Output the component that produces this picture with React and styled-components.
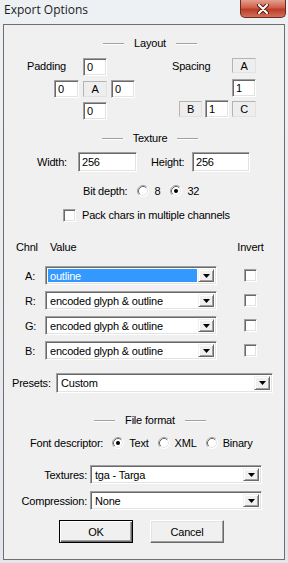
import React from "react";
import styled, { createGlobalStyle } from "styled-components";

const GlobalStyle = createGlobalStyle`
  html, body {
    margin: 0;
    padding: 0;
  }
  body {
    width: 288px;
    height: 563px;
    overflow: hidden;
    font-family: "Liberation Sans", Arial, sans-serif;
    font-size: 11px;
    letter-spacing: -0.2px;
    color: #000;
  }
  * {
    box-sizing: border-box;
  }
`;

const Window = styled.div`
  width: 288px;
  height: 563px;
  background: linear-gradient(#eef1f4, #e3e7eb);
  display: flex;
  flex-direction: column;
`;

const TitleBar = styled.div`
  height: 24px;
  display: flex;
  justify-content: space-between;
  align-items: flex-start;
`;

const Title = styled.div`
  font-family: "Open Sans", "Noto Sans", sans-serif;
  font-size: 12px;
  letter-spacing: 0;
  line-height: 16px;
  padding: 2px 0 0 4px;
  color: #1b1b1b;
`;

const CloseButton = styled.div`
  width: 46px;
  height: 18px;
  margin-right: 2px;
  border: 1px solid #6b2a22;
  border-top: none;
  border-radius: 0 0 5px 5px;
  background: linear-gradient(#e3a08f, #cf5e48 45%, #bd3d27 55%, #d0705a);
  display: flex;
  align-items: center;
  justify-content: center;
`;

const Client = styled.div`
  margin-left: 3px;
  width: 282px;
  height: 536px;
  border: 1px solid #6e6e6e;
  background: #f0f0f0;
  display: flex;
  flex-direction: column;
`;

const Section = styled.div`
  margin-top: ${(p) => p.$top}px;
  height: 14px;
  line-height: 14px;
  display: flex;
  align-items: center;
  justify-content: center;
  padding-left: 12px;
  gap: 10px;
`;

const Rule = styled.span`
  width: 21px;
  height: 1px;
  background: #a0a0a0;
  box-shadow: 0 1px 0 #fff;
`;

const LayoutRow = styled.div`
  margin-top: 8px;
  height: 62px;
  display: flex;
`;

const PadGrid = styled.div`
  margin-left: 23px;
  display: grid;
  grid-template-columns: 23px 25px 24px 24px;
  grid-template-rows: repeat(3, 18px);
  column-gap: 4px;
  row-gap: 4px;
`;

const SpaceGrid = styled.div`
  margin-left: 37px;
  display: grid;
  grid-template-columns: 4px 23px 24px 24px;
  grid-template-rows: repeat(3, 18px);
  column-gap: 3px;
  row-gap: 3px;
`;

const GridLabel = styled.div`
  grid-column: ${(p) => p.$col};
  grid-row: 1;
  line-height: 14px;
  padding-top: 1px;
  white-space: nowrap;
`;

const Field = styled.div`
  grid-column: ${(p) => p.$col || "auto"};
  grid-row: ${(p) => p.$row || "auto"};
  height: ${(p) => (p.$h ? `${p.$h}px` : "100%")};
  background: #fff;
  border: 1px solid;
  border-color: #a0a0a0 #fff #fff #a0a0a0;
  box-shadow: inset 1px 1px 0 #696969, inset -1px -1px 0 #e3e3e3;
  padding: 0 3px;
  display: flex;
  align-items: center;
  line-height: 14px;
`;

const Tag = styled.div`
  grid-column: ${(p) => p.$col};
  grid-row: ${(p) => p.$row};
  height: ${(p) => p.$h}px;
  align-self: start;
  margin-top: ${(p) => p.$mt}px;
  border: 1px solid;
  border-color: #b4b4b4 #e2e2e2 #e2e2e2 #b4b4b4;
  background: #eeeeee;
  display: flex;
  align-items: center;
  justify-content: center;
  line-height: 14px;
`;

const SizeRow = styled.div`
  margin-top: 7px;
  height: 20px;
  padding-left: 33px;
  display: grid;
  grid-template-columns: 41px 59px 55px 58px;
  align-items: center;
`;

const Label = styled.span`
  padding-left: ${(p) => p.$pl || 0}px;
  line-height: 14px;
  white-space: nowrap;
`;

const OptionRow = styled.div`
  margin-top: ${(p) => p.$top}px;
  padding-left: ${(p) => p.$left}px;
  height: 14px;
  display: flex;
  align-items: center;
  gap: ${(p) => p.$gap}px;
  line-height: 14px;
  white-space: nowrap;
`;

const RadioItem = styled.span`
  display: inline-flex;
  align-items: center;
  gap: 5px;
`;

const Box = styled.span`
  width: 13px;
  height: 13px;
  background: #fff;
  border: 1px solid;
  border-color: #a0a0a0 #fff #fff #a0a0a0;
  box-shadow: inset 1px 1px 0 #696969, inset -1px -1px 0 #e3e3e3;
  justify-self: center;
`;

const ChannelRow = styled.div`
  margin-top: ${(p) => p.$top}px;
  height: ${(p) => p.$h}px;
  padding-left: 12px;
  display: grid;
  grid-template-columns: 29px 172px 67px;
  align-items: center;
  line-height: 14px;
`;

const HeadCell = styled.span`
  justify-self: ${(p) => p.$align || "start"};
  padding-left: ${(p) => p.$pl || 0}px;
`;

const FormRow = styled.div`
  margin-top: ${(p) => p.$top}px;
  height: ${(p) => p.$h}px;
  padding-left: ${(p) => p.$left}px;
  display: grid;
  grid-template-columns: ${(p) => p.$cols};
  align-items: center;
  line-height: 14px;
`;

const RightLabel = styled.span`
  text-align: right;
  padding-right: 3px;
  white-space: nowrap;
`;

const ComboBox = styled.div`
  height: ${(p) => p.$h}px;
  background: #fff;
  border: 1px solid;
  border-color: #a0a0a0 #fff #fff #a0a0a0;
  box-shadow: inset 1px 1px 0 #696969, inset -1px -1px 0 #e3e3e3;
  padding: 2px;
  display: flex;
  align-items: stretch;
`;

const ComboText = styled.div`
  flex: 1;
  margin-right: 1px;
  padding-left: 2px;
  display: flex;
  align-items: center;
  white-space: nowrap;
  overflow: hidden;
  background: ${(p) => (p.$selected ? "#3399ff" : "transparent")};
  color: ${(p) => (p.$selected ? "#fff" : "#000")};
`;

const DropButton = styled.div`
  width: 16px;
  background: #f0f0f0;
  border: 1px solid;
  border-color: #f0f0f0 #696969 #696969 #f0f0f0;
  box-shadow: inset 1px 1px 0 #fff, inset -1px -1px 0 #a0a0a0;
  display: flex;
  align-items: center;
  justify-content: center;
`;

const ButtonRow = styled.div`
  margin-top: 10px;
  padding-left: 55px;
  display: flex;
  gap: 17px;
`;

const Button = styled.div`
  width: 74px;
  height: 23px;
  background: #f0f0f0;
  border: 1px solid;
  border-color: ${(p) => (p.$default ? "#000" : "#fff #696969 #696969 #fff")};
  box-shadow: ${(p) =>
    p.$default
      ? "inset 1px 1px 0 #fff, inset -1px -1px 0 #696969, inset -2px -2px 0 #a0a0a0"
      : "inset -1px -1px 0 #a0a0a0, inset 1px 1px 0 #e3e3e3"};
  display: flex;
  align-items: center;
  justify-content: center;
  line-height: 14px;
`;

const Radio = ({ checked }) => (
  <svg width="12" height="12" viewBox="0 0 12 12">
    <circle cx="6" cy="6" r="5.5" fill="#fff" />
    <path d="M2.11 9.89 A5.5 5.5 0 0 1 9.89 2.11" fill="none" stroke="#a0a0a0" />
    <path d="M9.89 2.11 A5.5 5.5 0 0 1 2.11 9.89" fill="none" stroke="#fff" />
    <path d="M2.82 9.18 A4.5 4.5 0 0 1 9.18 2.82" fill="none" stroke="#696969" />
    <path d="M9.18 2.82 A4.5 4.5 0 0 1 2.82 9.18" fill="none" stroke="#e3e3e3" />
    {checked && <circle cx="6" cy="6" r="2" fill="#000" />}
  </svg>
);

const Arrow = () => (
  <svg width="7" height="4" viewBox="0 0 7 4">
    <polygon points="0,0 7,0 3.5,4" fill="#000" />
  </svg>
);

const Combo = ({ value, selected, h = 19 }) => (
  <ComboBox $h={h}>
    <ComboText $selected={selected}>{value}</ComboText>
    <DropButton>
      <Arrow />
    </DropButton>
  </ComboBox>
);

const SectionTitle = ({ top, children }) => (
  <Section $top={top}>
    <Rule />
    <span>{children}</span>
    <Rule />
  </Section>
);

const channels = [
  { name: "A:", value: "outline", selected: true },
  { name: "R:", value: "encoded glyph & outline" },
  { name: "G:", value: "encoded glyph & outline" },
  { name: "B:", value: "encoded glyph & outline" },
];

export default function App() {
  return (
    <>
      <GlobalStyle />
      <Window>
        <TitleBar>
          <Title>Export Options</Title>
          <CloseButton>
            <svg width="12" height="10" viewBox="0 0 12 10">
              <path d="M2 1 L10 9 M10 1 L2 9" stroke="#5a1a12" strokeWidth="4" strokeLinecap="round" />
              <path d="M2 1 L10 9 M10 1 L2 9" stroke="#fff" strokeWidth="2" strokeLinecap="round" />
            </svg>
          </CloseButton>
        </TitleBar>
        <Client>
          <SectionTitle top={11}>Layout</SectionTitle>
          <LayoutRow>
            <PadGrid>
              <GridLabel $col="1 / 3">Padding</GridLabel>
              <Field $col="3" $row="1">0</Field>
              <Field $col="2" $row="2">0</Field>
              <Tag $col="3" $row="2" $h={16} $mt={1}>A</Tag>
              <Field $col="4" $row="2">0</Field>
              <Field $col="3" $row="3">0</Field>
            </PadGrid>
            <SpaceGrid>
              <GridLabel $col="1 / 4">Spacing</GridLabel>
              <Tag $col="4" $row="1" $h={15} $mt={0}>A</Tag>
              <Field $col="4" $row="2">1</Field>
              <Tag $col="2" $row="3" $h={16} $mt={1}>B</Tag>
              <Field $col="3" $row="3">1</Field>
              <Tag $col="4" $row="3" $h={16} $mt={1}>C</Tag>
            </SpaceGrid>
          </LayoutRow>

          <SectionTitle top={11}>Texture</SectionTitle>
          <SizeRow>
            <Label>Width:</Label>
            <Field $h={20}>256</Field>
            <Label $pl={14}>Height:</Label>
            <Field $h={20}>256</Field>
          </SizeRow>
          <OptionRow $top={12} $left={79} $gap={10}>
            <span>Bit depth:</span>
            <RadioItem>
              <Radio />8
            </RadioItem>
            <RadioItem>
              <Radio checked />32
            </RadioItem>
          </OptionRow>
          <OptionRow $top={10} $left={59} $gap={6}>
            <Box />
            <span>Pack chars in multiple channels</span>
          </OptionRow>

          <ChannelRow $top={18} $h={14}>
            <HeadCell>Chnl</HeadCell>
            <HeadCell $pl={5}>Value</HeadCell>
            <HeadCell $align="center">Invert</HeadCell>
          </ChannelRow>
          {channels.map((c, i) => (
            <ChannelRow key={c.name} $top={i === 0 ? 12 : 6} $h={19}>
              <Label $pl={9}>{c.name}</Label>
              <Combo value={c.value} selected={c.selected} />
              <Box />
            </ChannelRow>
          ))}

          <FormRow $top={13} $h={20} $left={8} $cols="44px 217px">
            <span>Presets:</span>
            <Combo value="Custom" h={20} />
          </FormRow>

          <SectionTitle top={20}>File format</SectionTitle>
          <OptionRow $top={9} $left={26} $gap={9}>
            <span>Font descriptor:</span>
            <RadioItem>
              <Radio checked />Text
            </RadioItem>
            <RadioItem>
              <Radio />XML
            </RadioItem>
            <RadioItem>
              <Radio />Binary
            </RadioItem>
          </OptionRow>

          <FormRow $top={15} $h={19} $left={0} $cols="86px 172px">
            <RightLabel>Textures:</RightLabel>
            <Combo value="tga - Targa" />
          </FormRow>
          <FormRow $top={7} $h={19} $left={0} $cols="86px 172px">
            <RightLabel>Compression:</RightLabel>
            <Combo value="None" />
          </FormRow>

          <ButtonRow>
            <Button $default>OK</Button>
            <Button>Cancel</Button>
          </ButtonRow>
        </Client>
      </Window>
    </>
  );
}
